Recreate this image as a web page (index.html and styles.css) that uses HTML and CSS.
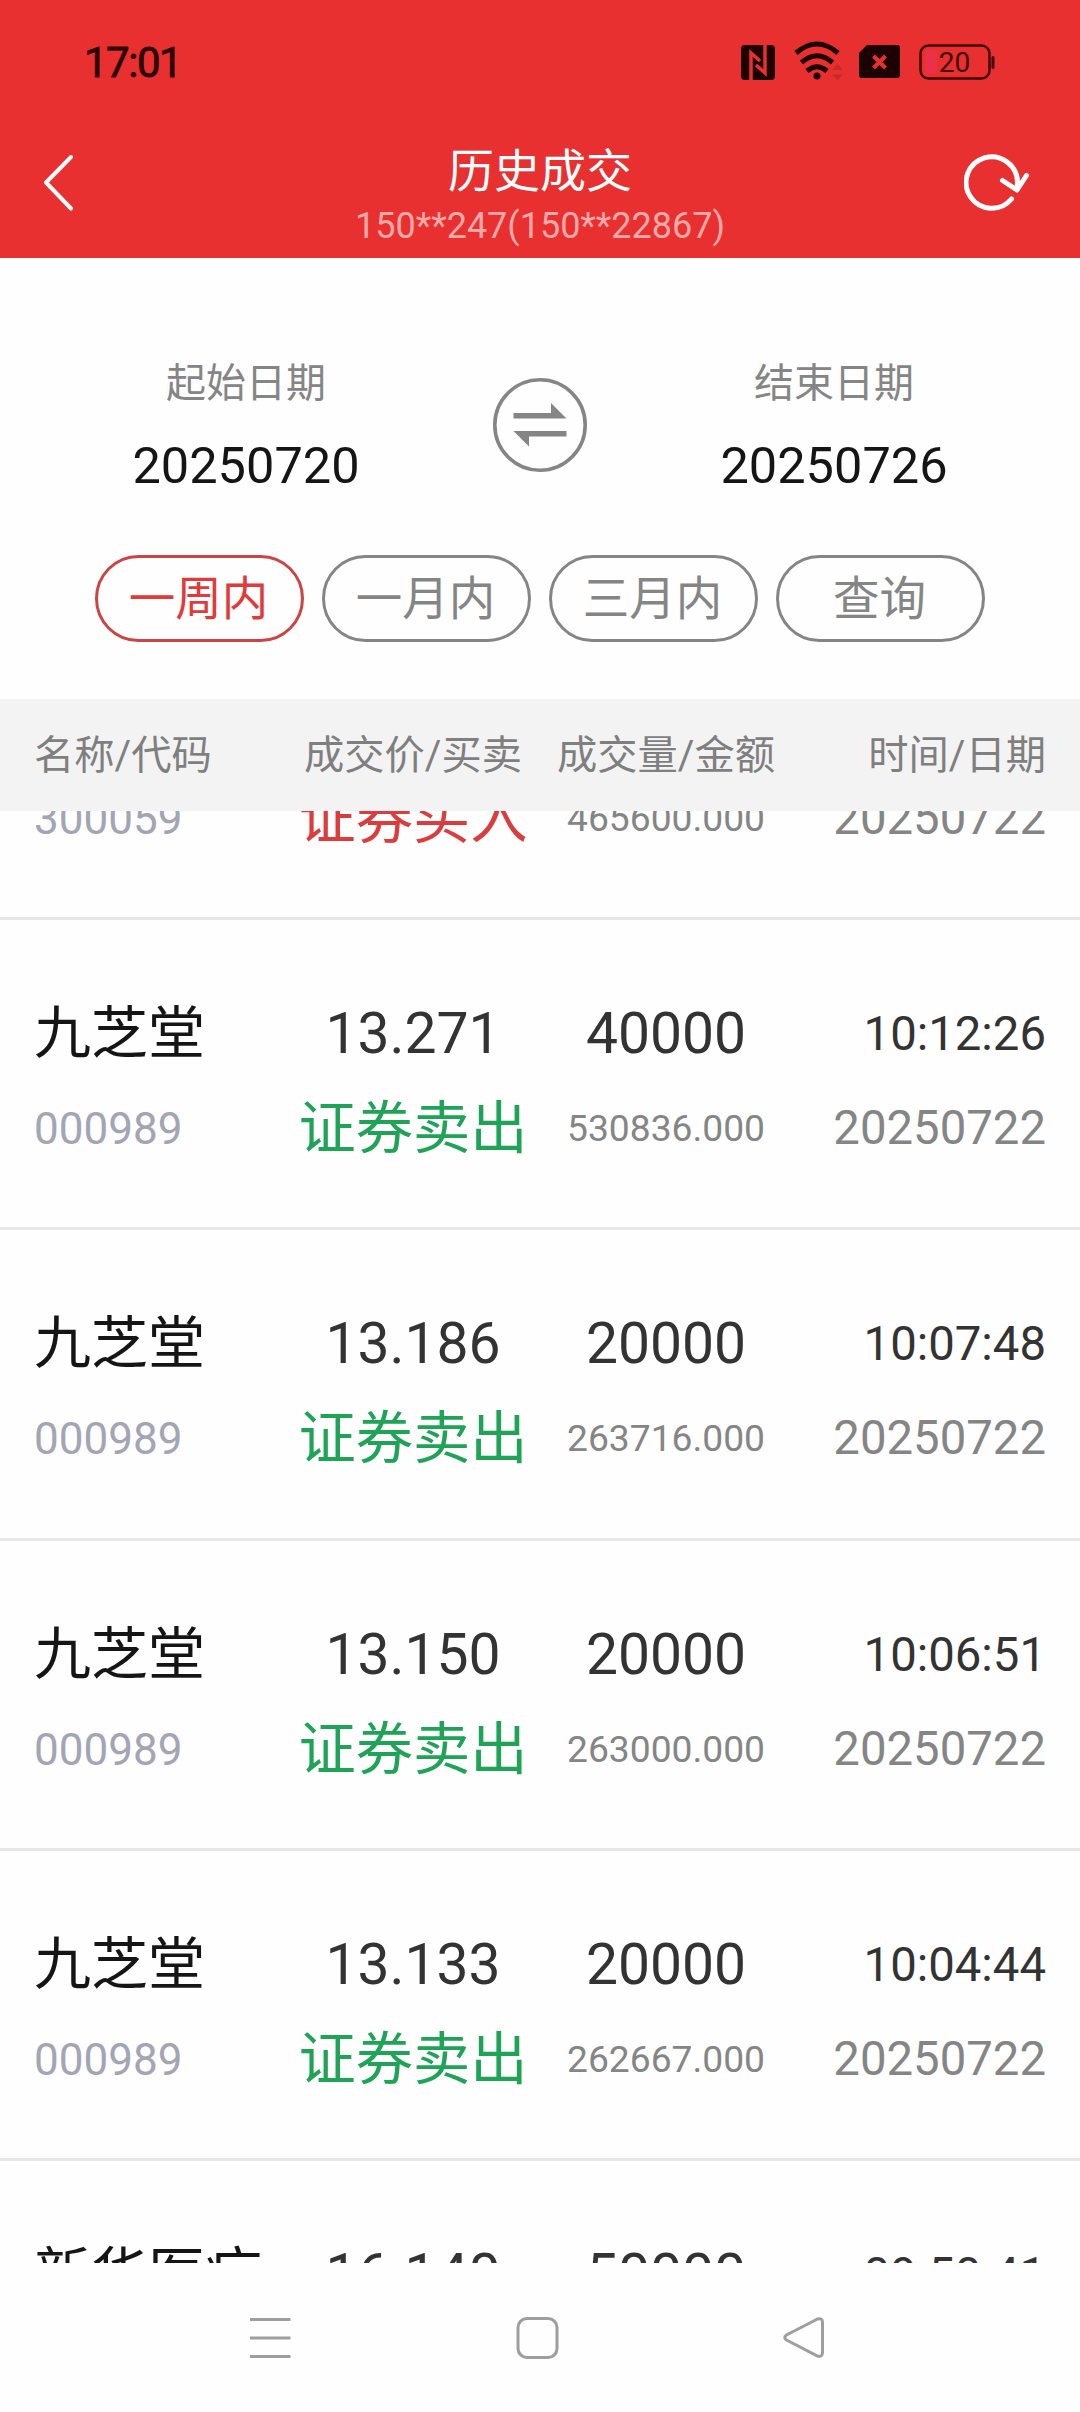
FILE: index.html
```html
<!DOCTYPE html>
<html lang="zh-CN">
<head>
  <meta charset="UTF-8">
  <title>历史成交</title>
  <link rel="stylesheet" href="styles.css">
</head>
<body>

  <div class="status-bar">
    <span class="clock">17:01</span>
    <svg class="status-icons" width="260" height="44" viewBox="738 40 260 44">
      <!-- nfc -->
      <rect x="741" y="45" width="34" height="35" rx="4" fill="#1c0202"/>
      <path d="M751 80V53L760 61M765 45V73L756 65" fill="none" stroke="#e83030" stroke-width="3.5"/>
      <!-- wifi -->
      <g fill="none" stroke="#1c0202" stroke-width="5">
        <path d="M796 53Q817 35 838 53"/>
        <path d="M801.500 62.500Q817 49 832.500 62.500"/>
        <path d="M807 71Q817 62.500 827 71"/>
      </g>
      <circle cx="817" cy="76" r="3.5" fill="#1c0202"/>
      <path d="M832 70L837.500 64L843 70ZM832 74.500H843L837.500 80Z" fill="#c82828"/>
      <!-- sim -->
      <path d="M867 45H897Q900 45 900 48V75Q900 78 897 78H862Q859 78 859 75V53Z" fill="#1c0202"/>
      <path d="M873.500 56L885.500 68M885.500 56L873.500 68" stroke="#e83030" stroke-width="4"/>
      <!-- battery -->
      <rect x="920.500" y="45.500" width="69" height="33" rx="8" fill="none" stroke="#400606" stroke-width="2.500"/>
      <rect x="925" y="50" width="12" height="24" rx="4" fill="#ec3048"/>
      <rect x="991.500" y="56" width="3" height="13" rx="1.500" fill="#400606"/>
      <text class="battery-text" x="954.500" y="72">20</text>
    </svg>
  </div>

  <div class="title-bar">
    <svg class="back" width="36" height="64" viewBox="40 150 36 64">
      <path d="M71 157L46 182.500L71 208.500" fill="none" stroke="#fff" stroke-width="4" stroke-linecap="round" stroke-linejoin="round"/>
    </svg>
    <div class="title">
      <h1>历史成交</h1>
      <p>150**247(150**22867)</p>
    </div>
    <svg class="refresh" width="76" height="66" viewBox="964 150 76 66">
      <g transform="translate(1 0)" fill="none" stroke="#fff" stroke-width="5" stroke-linecap="round" stroke-linejoin="round">
        <path d="M1010.500 199A25.700 25.700 0 1 1 1016.500 182.500L1016 189"/>
        <path d="M1001.500 180.500L1016 190L1025.500 175.500"/>
      </g>
    </svg>
  </div>

  <div class="filter">
    <div class="dates">
      <div class="date">
        <span class="date-label">起始日期</span>
        <span class="date-value">20250720</span>
      </div>
      <svg class="swap" width="96" height="96" viewBox="492 377 96 96">
        <circle cx="540" cy="425" r="45.200" fill="none" stroke="#858585" stroke-width="3.600"/>
        <path d="M513.500 418.500V413H551V403L566.500 418.500Z" fill="#858585"/>
        <path d="M566.500 431V436.500H529V446.500L513.500 431Z" fill="#858585"/>
      </svg>
      <div class="date">
        <span class="date-label">结束日期</span>
        <span class="date-value">20250726</span>
      </div>
    </div>
    <div class="ranges">
      <button class="range active">一周内</button>
      <button class="range">一月内</button>
      <button class="range">三月内</button>
      <button class="range">查询</button>
    </div>
  </div>

  <div class="grid head">
    <div class="first">名称/代码</div>
    <div>成交价/买卖</div>
    <div>成交量/金额</div>
    <div class="last">时间/日期</div>
  </div>

  <div class="list">
    <div class="grid row scrolled">
      <div class="first"><span class="code">300059</span></div>
      <div><span class="side buy">证券买入</span></div>
      <div><span class="amount">465600.000</span></div>
      <div class="last"><span class="day">20250722</span></div>
    </div>
    <div class="grid row">
      <div class="first"><span class="name">九芝堂</span><span class="code">000989</span></div>
      <div><span class="num">13.271</span><span class="side sell">证券卖出</span></div>
      <div><span class="num">40000</span><span class="amount">530836.000</span></div>
      <div class="last"><span class="time">10:12:26</span><span class="day">20250722</span></div>
    </div>
    <div class="grid row">
      <div class="first"><span class="name">九芝堂</span><span class="code">000989</span></div>
      <div><span class="num">13.186</span><span class="side sell">证券卖出</span></div>
      <div><span class="num">20000</span><span class="amount">263716.000</span></div>
      <div class="last"><span class="time">10:07:48</span><span class="day">20250722</span></div>
    </div>
    <div class="grid row">
      <div class="first"><span class="name">九芝堂</span><span class="code">000989</span></div>
      <div><span class="num">13.150</span><span class="side sell">证券卖出</span></div>
      <div><span class="num">20000</span><span class="amount">263000.000</span></div>
      <div class="last"><span class="time">10:06:51</span><span class="day">20250722</span></div>
    </div>
    <div class="grid row">
      <div class="first"><span class="name">九芝堂</span><span class="code">000989</span></div>
      <div><span class="num">13.133</span><span class="side sell">证券卖出</span></div>
      <div><span class="num">20000</span><span class="amount">262667.000</span></div>
      <div class="last"><span class="time">10:04:44</span><span class="day">20250722</span></div>
    </div>
    <div class="grid row">
      <div class="first"><span class="name">新华医疗</span></div>
      <div><span class="num">16.140</span></div>
      <div><span class="num">50000</span></div>
      <div class="last"><span class="time">09:50:41</span></div>
    </div>
  </div>

  <div class="nav-bar">
    <svg width="44" height="44" viewBox="0 0 44 44"><path d="M2 3.500H42.500M2 22H42.500M2 40.500H42.500"/></svg>
    <svg width="44" height="44" viewBox="0 0 44 44"><rect x="3" y="2.500" width="39" height="39" rx="9"/></svg>
    <svg width="44" height="44" viewBox="0 0 44 44"><path d="M35.500 3L4.500 19Q1 21.500 4.500 24L35.500 40Q40.500 41.500 40.500 36.500V6.500Q40.500 1.500 35.500 3Z"/></svg>
  </div>

</body>
</html>
```

FILE: styles.css
```css
body {
  margin: 0;
  width: 1080px;
  height: 2412px;
  overflow: hidden;
  display: flex;
  flex-direction: column;
  background: #fefefe;
  font-family: Roboto, "Noto Sans CJK SC", sans-serif;
}

svg {
  display: block;
  flex: none;
}

.status-bar {
  height: 125px;
  box-sizing: border-box;
  padding: 40px 82px 0 84px;
  display: flex;
  justify-content: space-between;
  background: #e83030;
}

.clock {
  font-size: 42px;
  line-height: 46px;
  letter-spacing: -1.5px;
  color: #2c0404;
  -webkit-text-stroke: 0.8px #2c0404;
}

.battery-text {
  font-family: Roboto, sans-serif;
  font-size: 28px;
  text-anchor: middle;
  fill: #400606;
}

.title-bar {
  height: 133px;
  box-sizing: border-box;
  padding: 15px 40px 0;
  display: grid;
  grid-template-columns: 76px 1fr 76px;
  background: #e83030;
  color: #fff;
}

.back,
.refresh {
  margin-top: 10px;
}

.title {
  padding-top: 1px;
  text-align: center;
}

.title h1 {
  margin: 0;
  font-size: 46px;
  font-weight: 400;
  line-height: 60px;
}

.title p {
  margin: 4px 0 0;
  font-size: 36px;
  line-height: 42px;
  color: #ffa9a9;
}

.filter {
  height: 441px;
  box-sizing: border-box;
  padding-top: 97px;
}

.dates {
  display: grid;
  grid-template-columns: 492px 96px 492px;
}

.swap {
  margin-top: 22px;
}

.date {
  padding-top: 1px;
  display: flex;
  flex-direction: column;
  align-items: center;
}

.date-label {
  font-size: 40px;
  line-height: 56px;
  color: #858585;
}

.date-value {
  margin-top: 24px;
  font-size: 50.5px;
  line-height: 60px;
  color: #151515;
}

.ranges {
  margin-top: 59px;
  display: flex;
  justify-content: center;
  gap: 18px;
}

.range {
  width: 209px;
  height: 87px;
  padding: 0 2px 0 0;
  border: 3px solid #858585;
  border-radius: 44px;
  background: none;
  font: 46.5px/80px Roboto, "Noto Sans CJK SC", sans-serif;
  color: #858585;
}

.range.active {
  border-color: #cc4444;
  color: #e03a3a;
}

.grid {
  display: grid;
  grid-template-columns: 286px 254px 252px 288px;
  text-align: center;
}

.grid .first {
  padding-left: 34px;
  text-align: left;
}

.grid .last {
  padding-right: 34px;
  text-align: right;
}

.head {
  height: 112px;
  flex: none;
  background: #f3f3f3;
  font-size: 40.3px;
  line-height: 114px;
  color: #7f7f7f;
  white-space: nowrap;
}

.list {
  height: 1452px;
  flex: none;
  overflow: hidden;
}

.row {
  height: 310.25px;
  box-sizing: border-box;
  border-bottom: 3px solid #e7e7e7;
  padding-top: 79px;
}

/* list is scrolled part way through the first record */
.scrolled {
  margin-top: -28px;
  height: 137px;
  padding-top: 0;
}

.row span {
  display: block;
  white-space: nowrap;
}

.name,
.num,
.time {
  height: 94px;
  line-height: 70px;
  color: #333;
}

.name {
  font-size: 57px;
  color: #151515;
}

.num {
  font-size: 57px;
}

.time {
  font-size: 47.3px;
}

.code,
.side,
.amount,
.day {
  line-height: 70px;
  color: #858585;
}

.code {
  font-size: 44px;
  line-height: 72px;
  color: #a3a5b4;
}

.side {
  font-size: 57.3px;
  line-height: 72px;
}

.buy {
  color: #dd3c3c;
}

.sell {
  color: #1fa457;
}

.amount {
  font-size: 37.2px;
}

.day {
  font-size: 47.3px;
}

.nav-bar {
  flex: 1;
  padding: 53px 254px 0 248px;
  display: flex;
  justify-content: space-between;
  background: #fefefe;
}

.nav-bar svg {
  fill: none;
  stroke: #9e9e9e;
  stroke-width: 3;
}
```
